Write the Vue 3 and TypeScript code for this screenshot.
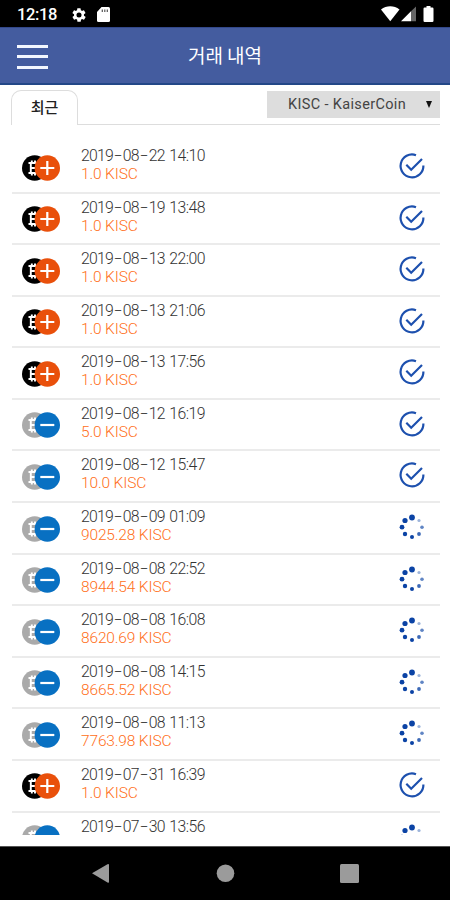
<script setup lang="ts">
interface Transaction {
  date: string
  time: string
  amount: string
  incoming: boolean
  done: boolean
}

const tx = (date: string, time: string, amount: string, incoming: boolean, done: boolean): Transaction => ({
  date, time, amount, incoming, done,
})

const transactions: Transaction[] = [
  tx('2019-08-22', '14:10', '1.0', true, true),
  tx('2019-08-19', '13:48', '1.0', true, true),
  tx('2019-08-13', '22:00', '1.0', true, true),
  tx('2019-08-13', '21:06', '1.0', true, true),
  tx('2019-08-13', '17:56', '1.0', true, true),
  tx('2019-08-12', '16:19', '5.0', false, true),
  tx('2019-08-12', '15:47', '10.0', false, true),
  tx('2019-08-09', '01:09', '9025.28', false, false),
  tx('2019-08-08', '22:52', '8944.54', false, false),
  tx('2019-08-08', '16:08', '8620.69', false, false),
  tx('2019-08-08', '14:15', '8665.52', false, false),
  tx('2019-08-08', '11:13', '7763.98', false, false),
  tx('2019-07-31', '16:39', '1.0', true, true),
  tx('2019-07-30', '13:56', '', false, false),
]

const dateParts = (date: string): string[] => date.split(/(-)/)
</script>

<template>
  <div class="screen">
    <div class="status">
      <span class="clock">12:18</span>
      <svg class="gear" viewBox="0 0 24 24"><path fill="#fff" fill-rule="evenodd" d="M19.4 13a7.500 7.500 0 0 0 0-2l2.100-1.700a.5.5 0 0 0 .1-.6l-2-3.500a.5.5 0 0 0-.6-.2l-2.500 1a7.300 7.300 0 0 0-1.700-1l-.4-2.600a.5.5 0 0 0-.5-.4h-4a.5.5 0 0 0-.5.4L9.100 5a7.700 7.700 0 0 0-1.700 1l-2.500-1a.5.5 0 0 0-.6.2l-2 3.500a.5.5 0 0 0 .1.600L4.600 11a7.900 7.900 0 0 0 0 2l-2.100 1.700a.5.5 0 0 0-.1.600l2 3.500c.1.200.4.300.6.200l2.500-1a7.300 7.300 0 0 0 1.700 1l.4 2.600c0 .2.200.4.500.4h4c.2 0 .5-.2.500-.4l.4-2.600a7.700 7.700 0 0 0 1.700-1l2.500 1c.2.100.5 0 .6-.2l2-3.500a.5.5 0 0 0-.1-.6zM12 15.800a3.800 3.800 0 1 1 0-7.600 3.800 3.800 0 0 1 0 7.600z" /></svg>
      <svg class="card" viewBox="0 0 13 15"><path fill="#fff" d="M4.500 0H11.500A1.500 1.500 0 0 1 13 1.500V13.500A1.500 1.500 0 0 1 11.500 15H1.500A1.500 1.500 0 0 1 0 13.500V5z" /><path stroke="#555" stroke-width="1.200" d="M5.300 2.500V5M7.800 2.500V5M10.300 2.500V5" /></svg>
      <svg class="signals" viewBox="0 0 54 17">
        <path fill="#fff" d="M0 3.500C5.500-.8 13-.8 18.500 3.500L9.250 15.200z" />
        <path fill="#fff" d="M20 15.200L30 5.200V15.200z" />
        <path fill="#666" d="M30 5.200L35 .5V15.200H30z" />
        <path fill="#fff" d="M45.500 1.500V0h4v1.500h1.800a1.200 1.200 0 0 1 1.200 1.200v12a1.200 1.200 0 0 1-1.200 1.200h-7.600a1.200 1.200 0 0 1-1.200-1.200v-12a1.200 1.200 0 0 1 1.200-1.200z" />
      </svg>
    </div>

    <header class="header">
      <button class="menu" aria-label="menu"><i /><i /><i /></button>
      <h1 class="title">거래 내역</h1>
    </header>

    <div class="filters">
      <div class="tab">최근</div>
      <div class="rest">
        <div class="select"><span>KISC - KaiserCoin</span><svg viewBox="0 0 6 7"><path d="M0 0H6L3 7z" /></svg></div>
      </div>
    </div>

    <main class="list">
      <div v-for="t in transactions" :key="t.date + t.time" class="row">
        <svg class="coin" viewBox="0 0 40 28">
          <circle cx="13.700" cy="14" r="12.700" :fill="t.incoming ? '#000' : '#aaa'" />
          <path fill="none" stroke="#fff" stroke-width="1.900" d="M7.500 9H16M7.500 19H16M9.800 9V19M9.800 14H15M10.800 6.500V9M14 6.500V9M10.800 19V21.500M14 19V21.500" />
          <circle cx="26.300" cy="14" r="12.700" :fill="t.incoming ? '#e9500b' : '#0870c2'" />
          <path stroke="#fff" stroke-width="2.200" :d="t.incoming ? 'M19.300 14H33.300M26.300 7V21' : 'M19.300 14H33.300'" />
        </svg>
        <div class="info">
          <div class="date"><template v-for="(p, i) in dateParts(t.date)" :key="i"><span v-if="p === '-'" class="dash">-</span><span v-else>{{ p }}</span></template><span class="time">{{ t.time }}</span></div>
          <div v-if="t.amount" class="amount">{{ t.amount }} KISC</div>
        </div>
        <svg v-if="t.done" class="state" viewBox="0 0 28 28" fill="none" stroke="#1d50ae" stroke-width="2.200">
          <path d="M18 3.200A11.400 11.400 0 1 0 25.400 13.500" />
          <path d="M8.300 12.700L13.200 17.700L24 7" />
        </svg>
        <svg v-else class="state" viewBox="0 0 28 28" fill="#0b43a5">
          <circle cx="14" cy="4.500" r="2.900" />
          <circle cx="7" cy="7.500" r="2.600" />
          <circle cx="4" cy="14.200" r="2.400" />
          <circle cx="7" cy="21" r="2.200" />
          <circle cx="14" cy="24" r="2" />
          <circle cx="21" cy="21" r="1.900" opacity=".8" />
          <circle cx="24" cy="14.200" r="1.800" opacity=".65" />
          <circle cx="21" cy="7.500" r="1.600" opacity=".4" />
        </svg>
      </div>
    </main>

    <nav class="nav">
      <svg viewBox="0 0 450 54" fill="#9b9b9b">
        <path d="M92 26.300L107.500 17.200Q109 16.500 109 18V34.700Q109 36.200 107.500 35.400z" />
        <circle cx="225.500" cy="26.300" r="8.800" />
        <rect x="340" y="17" width="19" height="19" rx="1.500" />
      </svg>
    </nav>
  </div>
</template>

<style>
body { margin: 0; }
</style>

<style scoped>
.screen {
  width: 450px;
  height: 900px;
  display: flex;
  flex-direction: column;
  overflow: hidden;
  background: #fff;
  font-family: Roboto, "Noto Sans CJK KR", sans-serif;
}
.status {
  height: 27px;
  flex: none;
  display: flex;
  align-items: center;
  box-sizing: border-box;
  padding: 2px 15px 0 17px;
  background: #000;
  color: #fff;
}
.clock { width: 54px; font-size: 16.500px; font-weight: 500; line-height: 20px; letter-spacing: -.4px; }
.gear { width: 16px; height: 16px; margin-right: 10px; }
.card { width: 13px; height: 15px; }
.signals { width: 54px; height: 17px; margin-left: auto; }
.header {
  height: 58px;
  flex: none;
  box-sizing: border-box;
  display: grid;
  grid-template-columns: 1fr auto 1fr;
  align-items: center;
  padding: 0 17px 2px;
  background: #445c9f;
  border-top: 1px solid #33488a;
  border-bottom: 2px solid #234787;
}
.menu {
  width: 31px;
  padding: 4px 0 0;
  border: 0;
  background: none;
  display: flex;
  flex-direction: column;
  gap: 7.500px;
}
.menu i { height: 3px; background: #f3f7ff; }
.title {
  margin: 0;
  color: #fff;
  font-family: "Noto Sans CJK KR", sans-serif;
  font-size: 19px;
  font-weight: 400;
  line-height: 28px;
}
.filters { height: 40px; flex: none; box-sizing: border-box; display: flex; padding: 5px 10px 0 11px; }
.tab {
  width: 67px;
  height: 35px;
  box-sizing: border-box;
  border: 1.500px solid #ddd;
  border-bottom: 0;
  border-radius: 10px 10px 0 0;
  text-align: center;
  font-family: "Noto Sans CJK KR", sans-serif;
  font-size: 15px;
  font-weight: 500;
  line-height: 32px;
  color: #222;
}
.rest { flex: 1; display: flex; justify-content: flex-end; align-items: flex-start; box-sizing: border-box; height: 35px; border-bottom: 1px solid #ddd; }
.select {
  width: 173px;
  height: 27px;
  margin-top: 1px;
  box-sizing: border-box;
  padding: 0 8px 0 21px;
  display: flex;
  align-items: center;
  justify-content: space-between;
  background: #ddd;
  color: #444;
  font-size: 14.500px;
  letter-spacing: .35px;
}
.select svg { width: 6px; height: 7px; fill: #111; }
.list { height: 710px; flex: none; overflow: hidden; box-sizing: border-box; padding: 17px 10px 0 12px; }
.row {
  height: 51.580px;
  box-sizing: border-box;
  border-bottom: 2px solid #ebebeb;
  display: flex;
  align-items: flex-start;
}
.coin { width: 40px; height: 28px; margin: 11.500px 18px 0 9px; }
.info { flex: 1; padding-left: 2px; font-family: Roboto, sans-serif; font-weight: 300; white-space: nowrap; }
.date { padding-top: 4px; height: 19px; line-height: 19px; font-size: 15.800px; letter-spacing: -.8px; color: #333; }
.dash { display: inline-block; width: 10px; text-align: center; letter-spacing: 0; transform: scaleX(1.700); }
.time { margin-left: 4.500px; letter-spacing: -.5px; }
.amount { line-height: 18px; font-size: 15.500px; letter-spacing: -.15px; color: #ff6f20; }
.state { width: 28px; height: 28px; margin: 10px 14.500px 0 0; }
.nav { height: 54px; margin-top: auto; background: #000; border-top: 1px solid #555; box-sizing: border-box; }
.nav svg { display: block; width: 450px; height: 54px; }
</style>
